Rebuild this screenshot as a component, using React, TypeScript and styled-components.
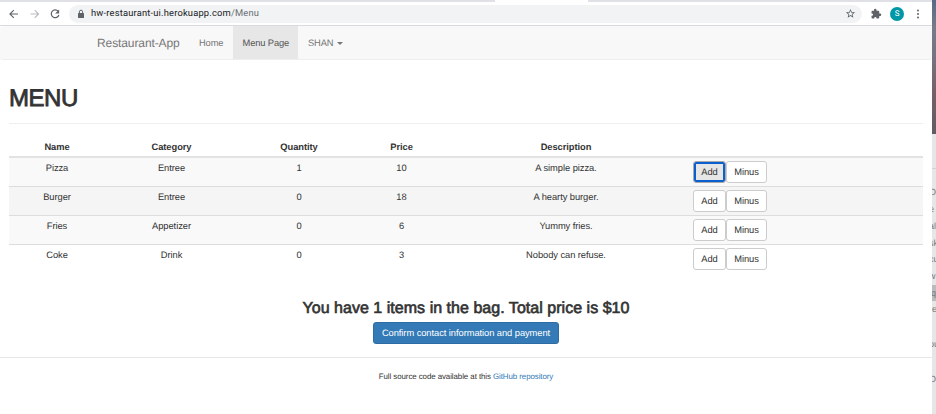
import React from "react";
import styled, { createGlobalStyle } from "styled-components";

const Global = createGlobalStyle`
  * { box-sizing: border-box; }
  body { margin: 0; background: #fff; color: #333; font: 9.333px/13.333px "Liberation Sans", Arial, sans-serif; letter-spacing: -0.06px; overflow: hidden; text-rendering: geometricPrecision; }
  button { text-rendering: inherit; letter-spacing: inherit; }
  h1, h3 { margin: 0; font-weight: 400; }
`;

const Desktop = styled.div`
  display: grid;
  grid-template-columns: 932px 4px;
  height: 414px;
  overflow: hidden;
`;
const Window = styled.div`
  min-width: 0;
  background: #fff;
`;
const TabStrip = styled.div`
  height: 2px;
  display: flex;
  justify-content: space-between;
`;
const TabEdge = styled.div<{ $width: number }>`
  width: ${(p) => p.$width}px;
  background: #dfe1e6;
`;
const BrowserBar = styled.div`
  height: 24px;
  display: flex;
  align-items: center;
  padding: 0 8px;
  border-bottom: 1px solid #d8dadd;
  background: #fff;
`;
const NavIcon = styled.svg<{ $gap: number }>`
  width: 12px;
  height: 12px;
  flex: none;
  margin-right: ${(p) => p.$gap}px;
`;
const AddressBar = styled.div`
  height: 18px;
  width: 793px;
  flex: none;
  display: flex;
  align-items: center;
  border-radius: 9px;
  background: #f1f3f4;
  padding: 0 6px 0 8px;
  margin-right: 8px;
`;
const Address = styled.span`
  flex: 1;
  margin-left: 6px;
  font: 9.35px/18px Roboto, sans-serif;
  letter-spacing: 0.18px;
  color: #202124;
  white-space: nowrap;
`;
const AddressPath = styled.span`
  color: #6a6e73;
`;
const Avatar = styled.div`
  width: 14px;
  height: 14px;
  flex: none;
  border-radius: 50%;
  background: #0097a7;
  color: #fff;
  text-align: center;
  font: 8px/14px Roboto, sans-serif;
  margin-right: 8px;
`;
const Navbar = styled.nav`
  height: 34px;
  display: flex;
  padding-left: 87px;
  background: #f8f8f8;
  border-bottom: 1px solid #eee;
  border-radius: 3px;
`;
const Brand = styled.div`
  width: 102px;
  padding-left: 10px;
  font-size: 12px;
  line-height: 34px;
  letter-spacing: -0.1px;
  color: #777;
`;
const NavItem = styled.div<{ $active?: boolean; $width: number }>`
  width: ${(p) => p.$width}px;
  height: 33px;
  padding-left: ${(p) => (p.$active ? 9.5 : 10)}px;
  line-height: 34px;
  letter-spacing: -0.12px;
  white-space: nowrap;
  color: ${(p) => (p.$active ? "#555" : "#777")};
  background: ${(p) => (p.$active ? "#e7e7e7" : "transparent")};
`;
const Caret = styled.span`
  display: inline-block;
  margin-left: 4px;
  vertical-align: middle;
  border-top: 3px solid #777;
  border-left: 3px solid transparent;
  border-right: 3px solid transparent;
`;
const Content = styled.main`
  padding: 25px 9.5px 0 9px;
`;
const Title = styled.h1`
  height: 39px;
  font-size: 24px;
  line-height: 27px;
  letter-spacing: -0.45px;
  -webkit-text-stroke: 0.8px #333;
  border-bottom: 1px solid #eee;
`;
const Table = styled.div`
  margin-top: 13px;
`;
const Row = styled.div<{ $tone?: string; $head?: boolean; $last?: boolean }>`
  display: grid;
  grid-template-columns: 96px 133px 122px 83px 246px 1fr;
  height: ${(p) => (p.$head ? 21 : p.$last ? 28 : 29)}px;
  padding-top: 4px;
  text-align: center;
  font-weight: ${(p) => (p.$head ? 700 : 400)};
  background: ${(p) => p.$tone ?? "#fff"};
  border-bottom: ${(p) => (p.$last ? "0" : p.$head ? "2px solid #e2e2e2" : "1px solid #ddd")};
`;
const Cell = styled.div``;
const Actions = styled.div`
  display: flex;
  margin-top: -1px;
  padding-left: 4px;
`;
const Button = styled.button<{ $width: number; $focused?: boolean }>`
  width: ${(p) => p.$width}px;
  height: 22px;
  padding: 0;
  border: 1px solid ${(p) => (p.$focused ? "#a9a9a9" : "#ccc")};
  border-radius: 3px;
  background: ${(p) => (p.$focused ? "#e6e6e6" : "#fff")};
  color: #333;
  font: 9.333px/19px "Liberation Sans", Arial, sans-serif;
  ${(p) => p.$focused && "box-shadow: inset 0 0 0 2px #0b60d0;"}
`;
const Summary = styled.section`
  display: flex;
  flex-direction: column;
  align-items: center;
  height: 85px;
  padding-top: 27px;
  border-bottom: 1px solid #e8e8e8;
`;
const Total = styled.h3`
  font-size: 16px;
  line-height: 18px;
  letter-spacing: 0.03px;
  -webkit-text-stroke: 0.65px #333;
  white-space: nowrap;
`;
const Confirm = styled.button`
  width: 186px;
  height: 22px;
  margin-top: 4px;
  padding: 1px 0 0;
  border: 1px solid #2e6da4;
  border-radius: 3px;
  background: #337ab7;
  color: #fff;
  white-space: nowrap;
  font: 9.333px/19px "Liberation Sans", Arial, sans-serif;
`;
const Footer = styled.footer`
  padding-top: 12px;
  text-align: center;
  font-size: 7.9px;
  letter-spacing: -0.07px;
`;
const Link = styled.span`
  color: #337ab7;
`;
const Backdrop = styled.aside`
  background: #e6e6e6;
  overflow: hidden;
  color: #777;
  font-size: 9px;
`;
const Photo = styled.div`
  height: 134px;
  background: linear-gradient(#586985, #777b8a 20%, #77717e 45%, #765f66 70%, #615c64);
`;
const Divider = styled.div`
  height: 1px;
  background: #d2d2d2;
  margin: 34px 0 15px;
`;
const Fragment = styled.div<{ $height: number; $selected?: boolean }>`
  height: ${(p) => p.$height}px;
  line-height: 17px;
  white-space: nowrap;
  text-indent: ${(p) => (p.$selected ? -1 : -3)}px;
  background: ${(p) => (p.$selected ? "#bbb" : "transparent")};
`;

const items = [
  { name: "Pizza", category: "Entree", quantity: 1, price: 10, description: "A simple pizza.", tone: "#f9f9f9" },
  { name: "Burger", category: "Entree", quantity: 0, price: 18, description: "A hearty burger.", tone: "#f5f5f5" },
  { name: "Fries", category: "Appetizer", quantity: 0, price: 6, description: "Yummy fries.", tone: "#f9f9f9" },
  { name: "Coke", category: "Drink", quantity: 0, price: 3, description: "Nobody can refuse.", tone: "#fff" },
];

const fragments: [string, number][] = [
  ["Or", 17], ["e", 17], ["al", 17], ["sk", 16], ["cu", 17], ["w", 17], ["q", 16], ["re", 35], ["ou", 35], ["O", 20],
];

export default function App() {
  return (
    <>
      <Global />
      <Desktop>
        <Window>
          <TabStrip>
            <TabEdge $width={495} />
            <TabEdge $width={344} />
          </TabStrip>
          <BrowserBar>
            <NavIcon $gap={9} viewBox="0 0 12 12" fill="none" stroke="#5f6368" strokeWidth="1.1">
              <path d="M10 6H2M5.8 2.1 1.9 6l3.9 3.9" />
            </NavIcon>
            <NavIcon $gap={8} viewBox="0 0 12 12" fill="none" stroke="#b9bbbe" strokeWidth="1.1">
              <path d="M1.5 6h8M5.7 2.1 9.6 6 5.7 9.9" />
            </NavIcon>
            <NavIcon $gap={8} viewBox="0 0 12 12" fill="none" stroke="#5f6368" strokeWidth="1.2">
              <path d="M9.1 3.2A3.9 3.9 0 1 0 9.9 7" />
              <path d="M10.1 1.5v4H6.1z" fill="#5f6368" stroke="none" />
            </NavIcon>
            <AddressBar>
              <svg width="8" height="10" viewBox="0 0 8 10">
                <rect x="1" y="4" width="6" height="5" rx=".6" fill="#5f6368" />
                <path d="M2.4 4V2.8a1.6 1.6 0 0 1 3.2 0V4" fill="none" stroke="#5f6368" />
              </svg>
              <Address>
                hw-restaurant-ui.herokuapp.com<AddressPath>/Menu</AddressPath>
              </Address>
              <svg width="11" height="11" viewBox="0 0 24 24" fill="#5f6368">
                <path d="m22 9.24-7.19-.62L12 2 9.19 8.63 2 9.24l5.46 4.73L5.82 21 12 17.27 18.18 21l-1.63-7.03L22 9.24zM12 15.4l-3.76 2.27 1-4.28-3.32-2.88 4.38-.38L12 6.1l1.71 4.04 4.38.38-3.32 2.88 1 4.28L12 15.4z" />
              </svg>
            </AddressBar>
            <NavIcon $gap={8} viewBox="0 0 24 24" fill="#5f6368">
              <path d="M20 11h-1.5V7.5a2 2 0 0 0-2-2H13V4a2.5 2.5 0 0 0-5 0v1.5H5a2 2 0 0 0-2 2V11h.8a2 2 0 0 1 0 4.5H3V19a2 2 0 0 0 2 2h3.5v-.8a2 2 0 0 1 4.5 0v.8h3.5a2 2 0 0 0 2-2v-3H20a2.5 2.5 0 0 0 0-5z" />
            </NavIcon>
            <Avatar>S</Avatar>
            <NavIcon $gap={0} viewBox="0 0 12 12" fill="#5f6368">
              <circle cx="6" cy="2.5" r="1" />
              <circle cx="6" cy="6" r="1" />
              <circle cx="6" cy="9.5" r="1" />
            </NavIcon>
          </BrowserBar>
          <Navbar>
            <Brand>Restaurant-App</Brand>
            <NavItem $width={44}>Home</NavItem>
            <NavItem $width={65} $active>Menu Page</NavItem>
            <NavItem $width={60}>
              SHAN
              <Caret />
            </NavItem>
          </Navbar>
          <Content>
            <Title>MENU</Title>
            <Table>
              <Row $head>
                {["Name", "Category", "Quantity", "Price", "Description"].map((label) => (
                  <Cell key={label}>{label}</Cell>
                ))}
              </Row>
              {items.map((item, index) => (
                <Row key={item.name} $tone={item.tone} $last={index === items.length - 1}>
                  <Cell>{item.name}</Cell>
                  <Cell>{item.category}</Cell>
                  <Cell>{item.quantity}</Cell>
                  <Cell>{item.price}</Cell>
                  <Cell>{item.description}</Cell>
                  <Actions>
                    <Button $width={33} $focused={item.quantity > 0}>Add</Button>
                    <Button $width={41}>Minus</Button>
                  </Actions>
                </Row>
              ))}
            </Table>
          </Content>
          <Summary>
            <Total>You have 1 items in the bag. Total price is $10</Total>
            <Confirm>Confirm contact information and payment</Confirm>
          </Summary>
          <Footer>
            Full source code available at this <Link>GitHub repository</Link>
          </Footer>
        </Window>
        <Backdrop>
          <Photo />
          <Divider />
          {fragments.map(([text, height]) => (
            <Fragment key={text} $height={height} $selected={text === "q"}>{text}</Fragment>
          ))}
        </Backdrop>
      </Desktop>
    </>
  );
}
